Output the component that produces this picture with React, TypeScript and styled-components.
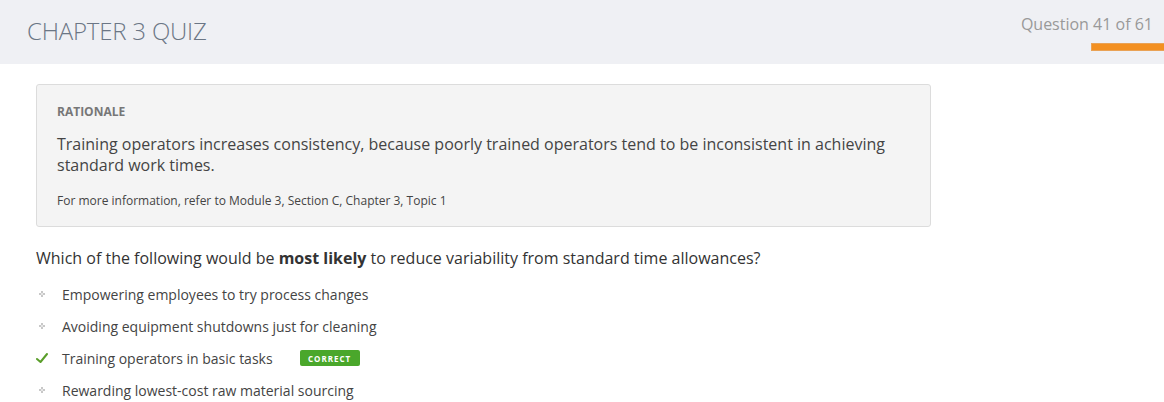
import React from "react";
import styled, { createGlobalStyle } from "styled-components";

const Global = createGlobalStyle`
  html, body { margin: 0; padding: 0; background: #fff; }
  body { font-family: "Open Sans", "Liberation Sans", sans-serif; color: #333; }
  * { box-sizing: border-box; }
`;

const Header = styled.header`
  height: 64px;
  background: #eff0f4;
  display: flex;
  justify-content: space-between;
  align-items: flex-start;
`;

const Title = styled.h1`
  margin: 0;
  padding: 15px 0 0 27px;
  font-size: 24px;
  font-weight: 300;
  color: #6b7685;
  line-height: 32px;
  letter-spacing: -0.2px;
`;

const Progress = styled.div`
  display: flex;
  flex-direction: column;
  align-items: flex-end;
  padding-top: 13px;
`;

const Counter = styled.div`
  font-size: 16px;
  color: #999;
  line-height: 22px;
  padding-right: 11px;
`;

const Bar = styled.div`
  margin-top: 8px;
  width: 73px;
  height: 8px;
  background: #f39021;
  border: 1px solid #e9a255;
  border-right: none;
`;

const Main = styled.main`
  padding: 20px 0 0 36px;
  width: 931px;
`;

const Rationale = styled.section`
  background: #f4f4f4;
  border: 1px solid #dcdcdc;
  border-radius: 3px;
  padding: 18px 20px 16px 20px;
`;

const Label = styled.div`
  font-size: 12px;
  font-weight: 700;
  color: #777;
  line-height: 18px;
`;

const Body = styled.p`
  margin: 13px 0 0 0;
  font-size: 16px;
  line-height: 21px;
  color: #444;
`;

const Ref = styled.p`
  margin: 16px 0 0 0;
  font-size: 12px;
  line-height: 18px;
  color: #444;
`;

const Question = styled.p`
  margin: 19px 0 0 0;
  font-size: 16px;
  line-height: 24px;
  color: #333;
  b { font-weight: 700; }
`;

const Options = styled.ul`
  list-style: none;
  margin: 8px 0 0 0;
  padding: 0;
`;

const Option = styled.li`
  display: flex;
  align-items: center;
  height: 32px;
  font-size: 14px;
  color: #444;
`;

const Marker = styled.span`
  width: 26px;
  display: flex;
  align-items: center;
  justify-content: flex-start;
`;

const Badge = styled.span`
  margin-left: 27px;
  background: #4aa72b;
  color: #fff;
  font-size: 8px;
  font-weight: 700;
  letter-spacing: 1px;
  border-radius: 2px;
  height: 16px;
  width: 60px;
  display: inline-flex;
  align-items: center;
  justify-content: center;
`;

const Dot = () => (
  <svg width="12" height="12" viewBox="0 0 12 12">
    <rect x="5" y="3" width="2" height="2" fill="#c8c8c8" />
    <rect x="5" y="7" width="2" height="2" fill="#c8c8c8" />
    <rect x="3" y="5" width="2" height="2" fill="#c8c8c8" />
    <rect x="7" y="5" width="2" height="2" fill="#c8c8c8" />
    <rect x="5" y="5" width="2" height="2" fill="#e6e6e6" />
  </svg>
);

const Check = () => (
  <svg width="12" height="12" viewBox="0 0 12 12">
    <path d="M1 7 L4.5 10 L11 2" fill="none" stroke="#5a9e2a" strokeWidth="2" strokeLinecap="round" strokeLinejoin="round" />
  </svg>
);

const options = [
  { text: "Empowering employees to try process changes", correct: false },
  { text: "Avoiding equipment shutdowns just for cleaning", correct: false },
  { text: "Training operators in basic tasks", correct: true },
  { text: "Rewarding lowest-cost raw material sourcing", correct: false },
];

export default function App() {
  return (
    <>
      <Global />
      <Header>
        <Title>CHAPTER 3 QUIZ</Title>
        <Progress>
          <Counter>Question 41 of 61</Counter>
          <Bar />
        </Progress>
      </Header>
      <Main>
        <Rationale>
          <Label>RATIONALE</Label>
          <Body>
            Training operators increases consistency, because poorly trained operators tend to be inconsistent in achieving
            standard work times.
          </Body>
          <Ref>For more information, refer to Module 3, Section C, Chapter 3, Topic 1</Ref>
        </Rationale>
        <Question>
          Which of the following would be <b>most likely</b> to reduce variability from standard time allowances?
        </Question>
        <Options>
          {options.map((o) => (
            <Option key={o.text}>
              <Marker>{o.correct ? <Check /> : <Dot />}</Marker>
              {o.text}
              {o.correct && <Badge>CORRECT</Badge>}
            </Option>
          ))}
        </Options>
      </Main>
    </>
  );
}
